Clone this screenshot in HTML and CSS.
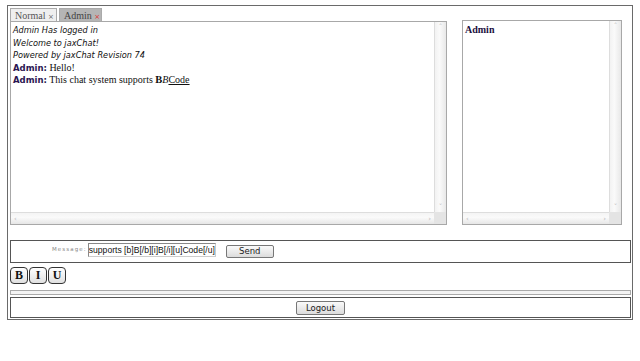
FILE: index.html
```html
<!DOCTYPE html>
<html>
<head>
<meta charset="utf-8">
<link rel="stylesheet" href="styles.css">
</head>
<body>
<div class="app">
  <div class="tabs">
    <div class="tab tab-normal">Normal <span class="x">×</span></div>
    <div class="tab tab-admin">Admin <span class="x red">×</span></div>
  </div>
  <div class="main">
    <div class="panel chat">
      <div class="content">
        <div class="sys">Admin Has logged in</div>
        <div class="sys">Welcome to jaxChat!</div>
        <div class="sys">Powered by jaxChat Revision 74</div>
        <div class="msg"><b class="nick">Admin:</b> Hello!</div>
        <div class="msg"><b class="nick">Admin:</b> This chat system supports <b>B</b><i>B</i><u>Code</u></div>
      </div>
      <div class="vscroll"><span class="arr">˄</span><span class="arr">˅</span></div>
      <div class="hscroll"><span class="arr">‹</span><span class="arr">›</span></div>
      <div class="corner"></div>
    </div>
    <div class="panel users">
      <div class="content"><div class="user">Admin</div></div>
      <div class="vscroll"><span class="arr">˄</span><span class="arr">˅</span></div>
      <div class="hscroll"><span class="arr">‹</span><span class="arr">›</span></div>
      <div class="corner"></div>
    </div>
  </div>
  <div class="msgbox">
    <span class="label">Message:</span>
    <div class="input">supports [b]B[/b][i]B[/i][u]Code[/u]</div>
    <div class="btn send">Send</div>
  </div>
  <div class="fmt">
    <div class="fbtn"><b>B</b></div>
    <div class="fbtn"><b>I</b></div>
    <div class="fbtn"><b>U</b></div>
  </div>
  <div class="bar"></div>
  <div class="logoutbox">
    <div class="btn logout">Logout</div>
  </div>
</div>
</body>
</html>
```

FILE: styles.css
```css
html, body { margin: 0; padding: 0; background: #fff; }
body { padding: 5px 7px 0 7px; }
.app {
  width: 621px;
  height: 312px;
  border: 1px solid #6a6a6a;
  padding: 1px 1px 0 2px;
  box-sizing: content-box;
  display: flex;
  flex-direction: column;
}
.tabs { display: flex; gap: 2px; height: 14px; flex: none; margin-top: 1px; }
.tab {
  font-family: "Liberation Serif", serif;
  font-size: 10px;
  line-height: 13px;
  color: #555;
  padding: 0 0 0 4px;
  border: 1px solid #aaa;
  border-bottom: none;
  white-space: nowrap;
  box-sizing: border-box;
}
.tab-normal { background: #efefef; width: 47px; }
.tab-admin { background: #b5b5b5; width: 43px; color: #444; }
.x { font-family: "DejaVu Sans", sans-serif; font-size: 7px; color: #666; }
.x.red { color: #d33; }
.main {
  display: grid;
  grid-template-columns: 437px 160px;
  column-gap: 15px;
  align-items: start;
  flex: none;
  margin-top: -1px;
}
.panel {
  position: relative;
  border: 1px solid #a8a8a8;
  box-sizing: border-box;
  background: #fff;
}
.chat { height: 204px; }
.users { height: 205px; margin-top: -1px; }
.content { padding: 2px 2px; }
.sys {
  font-family: "DejaVu Sans", sans-serif;
  font-style: italic;
  font-size: 8.2px;
  line-height: 12.5px;
  color: #111;
}
.msg {
  font-family: "Liberation Serif", serif;
  font-size: 10px;
  line-height: 12.5px;
  color: #111;
}
.msg b { font-size: 10.5px; }
.nick {
  font-family: "DejaVu Sans", sans-serif;
  font-size: 8.5px !important;
  color: #2a1450;
}
.user {
  font-family: "Liberation Serif", serif;
  font-weight: bold;
  font-size: 10px;
  color: #1c1040;
  padding-top: 1px;
}
.vscroll {
  position: absolute; right: 0; top: 0; bottom: 12px; width: 11px;
  background: linear-gradient(to right, #f2f2f2, #fafafa 40%, #e8e8e8);
  border-left: 1px solid #ddd;
  display: flex; flex-direction: column; justify-content: space-between; align-items: center;
}
.hscroll {
  position: absolute; left: 0; right: 12px; bottom: 0; height: 11px;
  background: linear-gradient(to bottom, #f4f4f4, #fafafa 40%, #e6e6e6);
  border-top: 1px solid #ddd;
  display: flex; justify-content: space-between; align-items: center; padding: 0 3px;
}
.corner {
  position: absolute; right: 0; bottom: 0; width: 12px; height: 12px; background: #e4e4e4;
}
.arr { font-family: "DejaVu Sans", sans-serif; font-size: 7px; color: #bbb; line-height: 10px; }
.msgbox {
  margin-top: 15px;
  height: 23px;
  flex: none;
  box-sizing: border-box;
  border: 1px solid #555;
  display: flex;
  align-items: center;
}
.label {
  font-family: "DejaVu Sans", sans-serif;
  font-size: 5.5px;
  color: #888;
  letter-spacing: 1.1px;
  margin-left: 41px;
  margin-top: -6px;
}
.input {
  margin-left: 1px;
  width: 128px;
  height: 14px;
  box-sizing: border-box;
  border: 1px solid #888;
  border-right-color: #ccc;
  border-bottom-color: #ccc;
  font-family: "Liberation Sans", sans-serif;
  font-size: 8.6px;
  line-height: 12px;
  white-space: nowrap;
  overflow: hidden;
  padding-left: 0;
  color: #111;
  margin-top: -4px;
}
.btn {
  font-family: "DejaVu Sans", sans-serif;
  font-size: 8.5px;
  color: #222;
  text-align: center;
  box-sizing: border-box;
  border: 1px solid #777;
  border-radius: 2px;
  background: linear-gradient(to bottom, #fafafa, #dcdcdc);
  line-height: 11px;
}
.send { width: 48px; height: 13px; margin-left: 10px; }
.fmt { display: flex; gap: 1px; margin-top: 4px; height: 17px; flex: none; }
.fbtn {
  width: 18px; height: 17px; box-sizing: border-box;
  border: 1px solid #333; border-radius: 4px;
  background: linear-gradient(to bottom, #fff, #e0e0e0);
  font-family: "Liberation Serif", serif; font-size: 12px; line-height: 15px;
  text-align: center; color: #111;
}
.bar {
  margin-top: 6px;
  height: 5px;
  flex: none;
  box-sizing: border-box;
  border: 1px solid #aaa;
  background: #f4f4f4;
}
.logoutbox {
  margin-top: 2px;
  height: 21px;
  flex: none;
  box-sizing: border-box;
  border: 1px solid #555;
  display: flex;
  justify-content: center;
  align-items: center;
}
.logout { width: 49px; height: 14px; line-height: 12px; }
```
